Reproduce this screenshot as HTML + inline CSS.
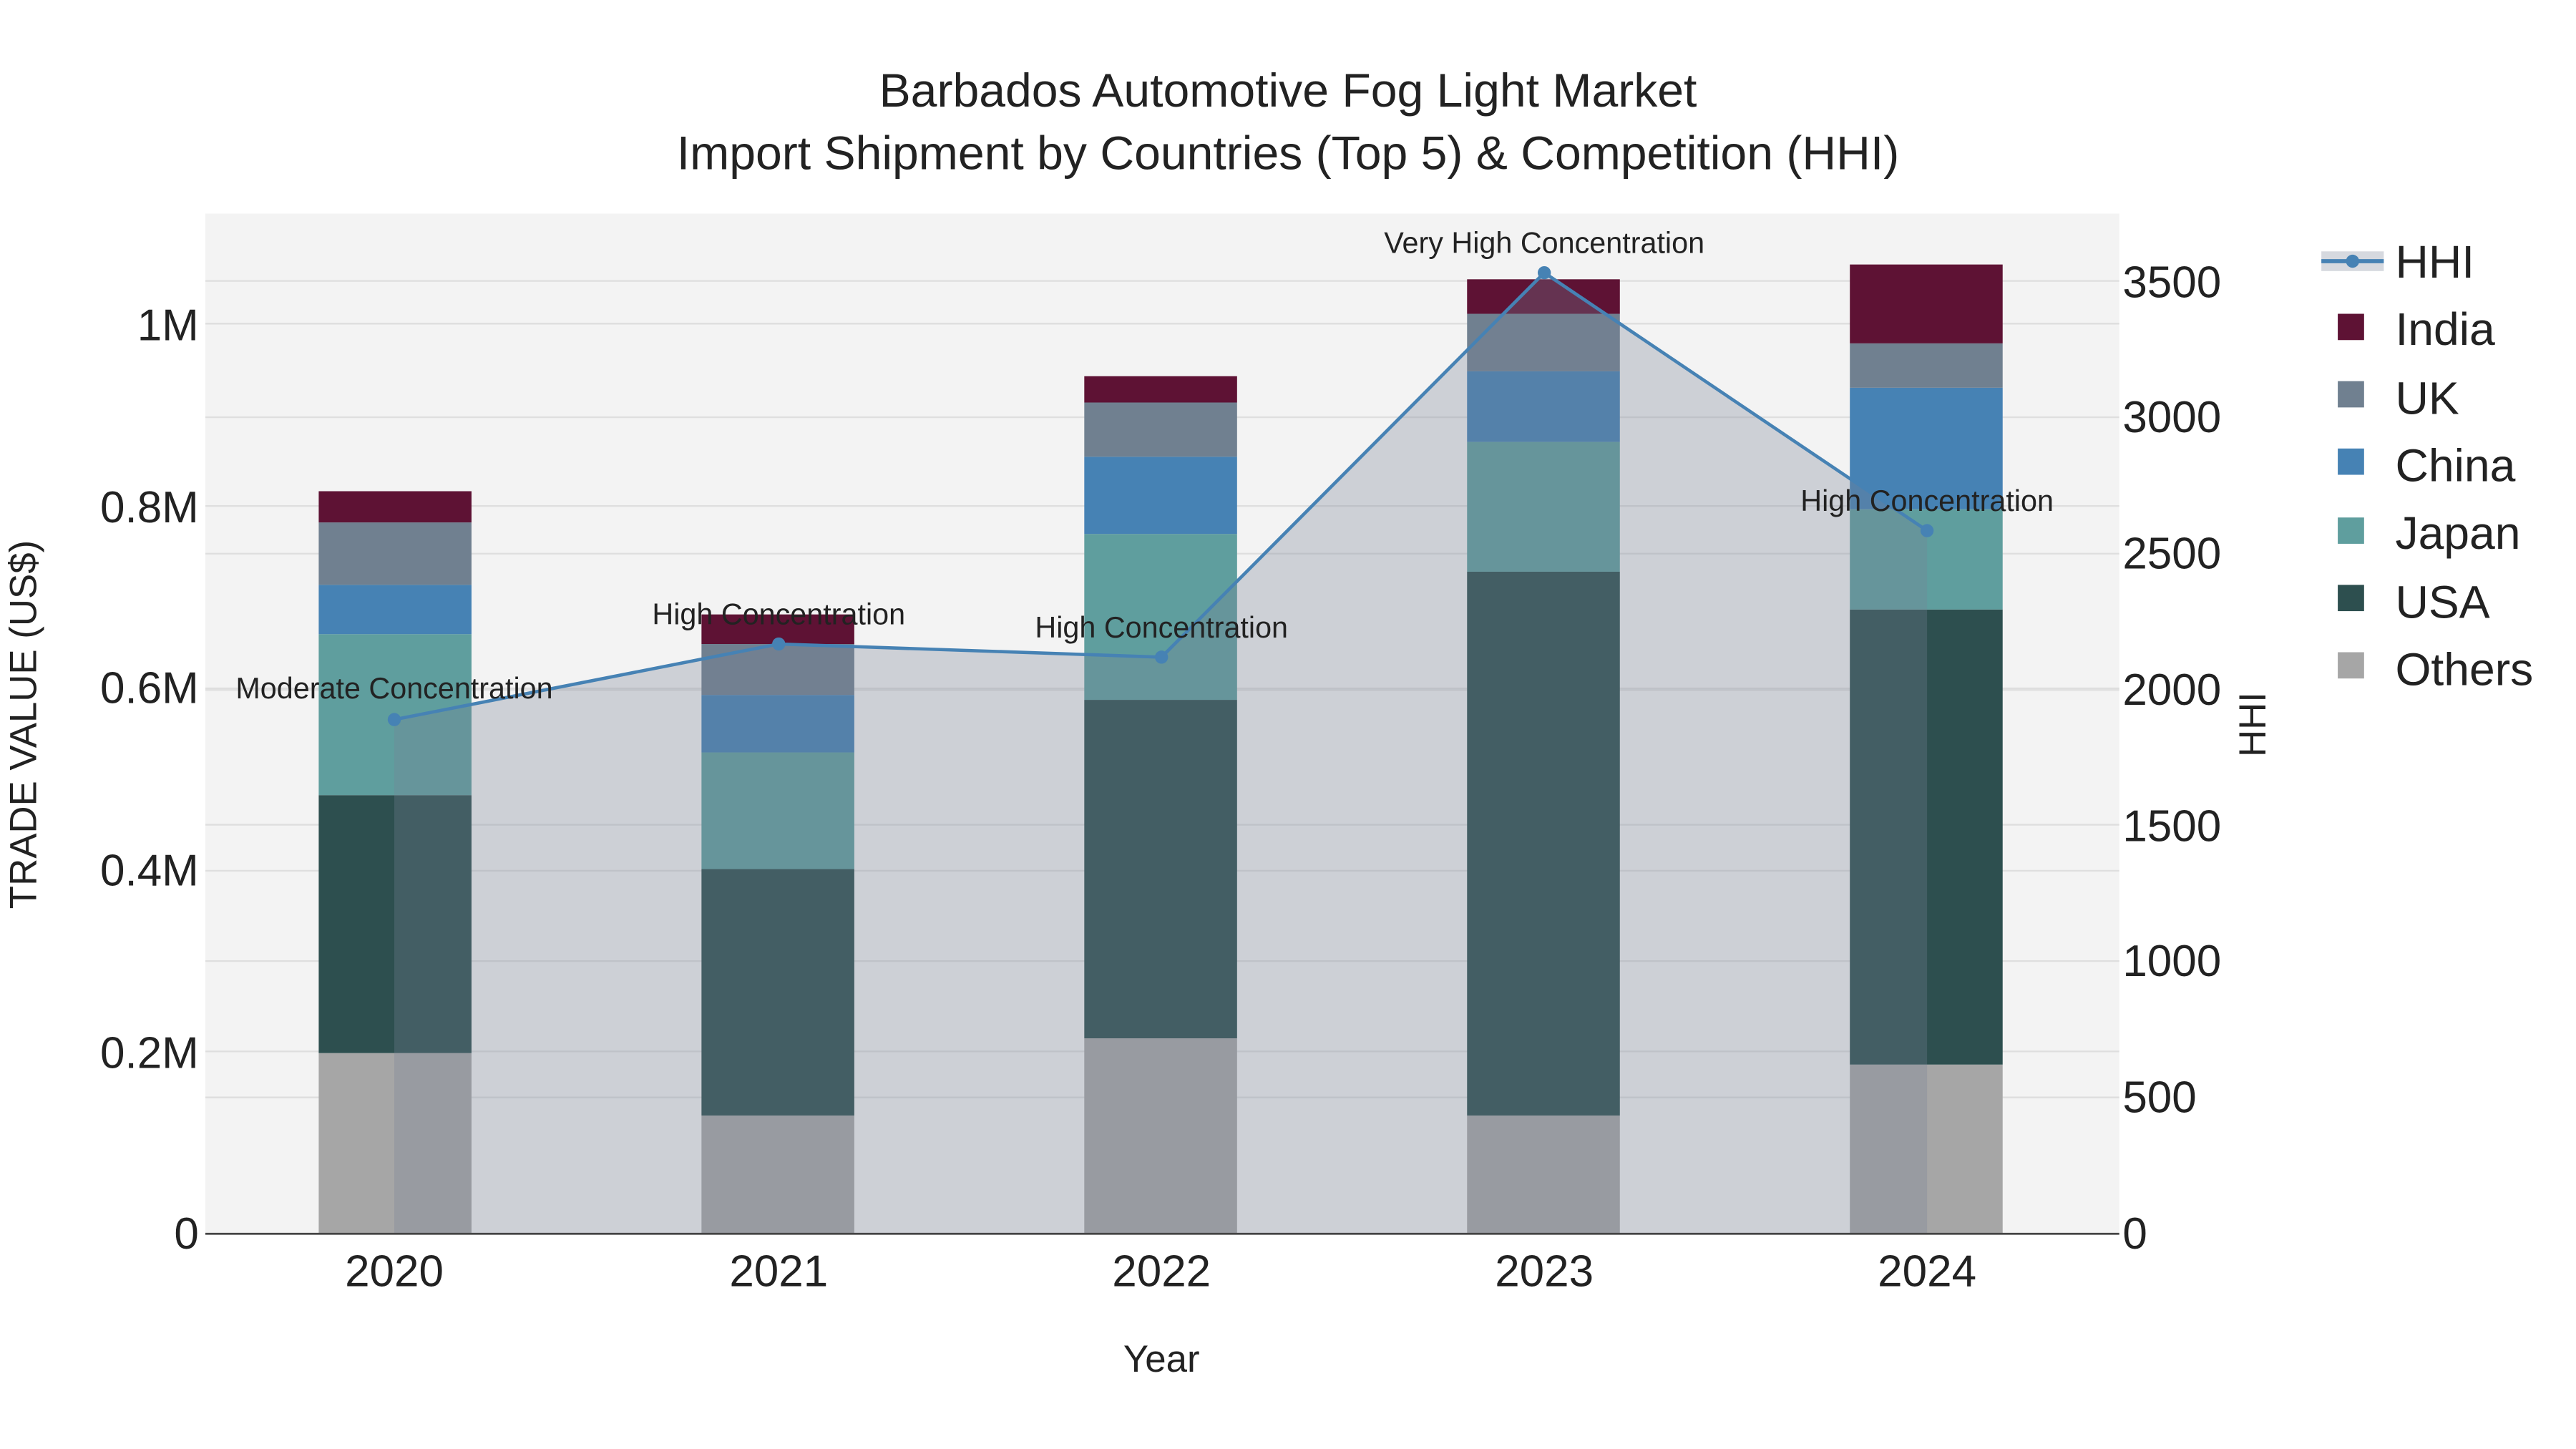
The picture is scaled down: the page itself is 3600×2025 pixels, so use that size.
<!DOCTYPE html>
<html><head><meta charset="utf-8">
<style>
html,body{margin:0;padding:0;background:#fff;}
svg{display:block;}
text{font-family:"Liberation Sans",Arial,sans-serif;fill:#222;}
</style></head>
<body>
<svg width="3600" height="2025" viewBox="0 0 1568 882" xmlns="http://www.w3.org/2000/svg">
<rect x="0" y="0" width="1568" height="882" fill="#fff"/>
<rect x="125" y="130" width="1165" height="621" fill="#f3f3f3"/>
<g stroke="#dedede" stroke-width="1">
<line x1="125" x2="1290" y1="640" y2="640"/><line x1="125" x2="1290" y1="530" y2="530"/>
<line x1="125" x2="1290" y1="419" y2="419"/><line x1="125" x2="1290" y1="308" y2="308"/>
<line x1="125" x2="1290" y1="197" y2="197"/>
<line x1="125" x2="1290" y1="668" y2="668"/><line x1="125" x2="1290" y1="585" y2="585"/>
<line x1="125" x2="1290" y1="502" y2="502"/><line x1="125" x2="1290" y1="420" y2="420"/>
<line x1="125" x2="1290" y1="337" y2="337"/><line x1="125" x2="1290" y1="254" y2="254"/>
<line x1="125" x2="1290" y1="171" y2="171"/>
</g>
<g>
<rect x="194" y="641" width="93" height="110" fill="#a6a6a6"/>
<rect x="194" y="484" width="93" height="157" fill="#2d4f4f"/>
<rect x="194" y="386" width="93" height="98" fill="#5f9e9e"/>
<rect x="194" y="356" width="93" height="30" fill="#4682b4"/>
<rect x="194" y="318" width="93" height="38" fill="#708090"/>
<rect x="194" y="299" width="93" height="19" fill="#5e1234"/>

<rect x="427" y="679" width="93" height="72" fill="#a6a6a6"/>
<rect x="427" y="529" width="93" height="150" fill="#2d4f4f"/>
<rect x="427" y="458" width="93" height="71" fill="#5f9e9e"/>
<rect x="427" y="423" width="93" height="35" fill="#4682b4"/>
<rect x="427" y="392" width="93" height="31" fill="#708090"/>
<rect x="427" y="374" width="93" height="18" fill="#5e1234"/>

<rect x="660" y="632" width="93" height="119" fill="#a6a6a6"/>
<rect x="660" y="426" width="93" height="206" fill="#2d4f4f"/>
<rect x="660" y="325" width="93" height="101" fill="#5f9e9e"/>
<rect x="660" y="278" width="93" height="47" fill="#4682b4"/>
<rect x="660" y="245" width="93" height="33" fill="#708090"/>
<rect x="660" y="229" width="93" height="16" fill="#5e1234"/>

<rect x="893" y="679" width="93" height="72" fill="#a6a6a6"/>
<rect x="893" y="348" width="93" height="331" fill="#2d4f4f"/>
<rect x="893" y="269" width="93" height="79" fill="#5f9e9e"/>
<rect x="893" y="226" width="93" height="43" fill="#4682b4"/>
<rect x="893" y="191" width="93" height="35" fill="#708090"/>
<rect x="893" y="170" width="93" height="21" fill="#5e1234"/>

<rect x="1126" y="648" width="93" height="103" fill="#a6a6a6"/>
<rect x="1126" y="371" width="93" height="277" fill="#2d4f4f"/>
<rect x="1126" y="310" width="93" height="61" fill="#5f9e9e"/>
<rect x="1126" y="236" width="93" height="74" fill="#4682b4"/>
<rect x="1126" y="209" width="93" height="27" fill="#708090"/>
<rect x="1126" y="161" width="93" height="48" fill="#5e1234"/>
</g>
<polygon points="240,438 474,392 707,400 940,166 1173,323 1173,751 240,751" fill="rgba(120,130,150,0.3)"/>
<polyline points="240,438 474,392 707,400 940,166 1173,323" fill="none" stroke="#4682b4" stroke-width="2"/>
<g fill="#4682b4"><circle cx="240" cy="438" r="4"/><circle cx="474" cy="392" r="4"/><circle cx="707" cy="400" r="4"/><circle cx="940" cy="166" r="4"/><circle cx="1173" cy="323" r="4"/></g>
<line x1="125" x2="1290" y1="751" y2="751" stroke="#444" stroke-width="1.2"/>
<g font-size="18" text-anchor="middle">
<text x="240" y="425">Moderate Concentration</text>
<text x="474" y="380">High Concentration</text>
<text x="707" y="388">High Concentration</text>
<text x="940" y="154">Very High Concentration</text>
<text x="1173" y="311">High Concentration</text>
</g>
<g font-size="28.8" text-anchor="middle">
<text x="784" y="65">Barbados Automotive Fog Light Market</text>
<text x="784" y="103">Import Shipment by Countries (Top 5) &amp; Competition (HHI)</text>
</g>
<g font-size="27" text-anchor="end">
<text x="121" y="760">0</text><text x="121" y="650">0.2M</text><text x="121" y="539">0.4M</text>
<text x="121" y="428">0.6M</text><text x="121" y="318">0.8M</text><text x="121" y="207">1M</text>
</g>
<g font-size="27" text-anchor="start">
<text x="1292" y="760">0</text><text x="1292" y="677">500</text><text x="1292" y="594">1000</text>
<text x="1292" y="512">1500</text><text x="1292" y="429">2000</text><text x="1292" y="346">2500</text>
<text x="1292" y="263">3000</text><text x="1292" y="181">3500</text>
</g>
<g font-size="27" text-anchor="middle">
<text x="240" y="783">2020</text><text x="474" y="783">2021</text><text x="707" y="783">2022</text>
<text x="940" y="783">2023</text><text x="1173" y="783">2024</text>
</g>
<text x="707" y="835" font-size="23" text-anchor="middle">Year</text>
<text transform="translate(22,441) rotate(-90)" font-size="23" text-anchor="middle">TRADE VALUE (US$)</text>
<text transform="translate(1379,441) rotate(-90)" font-size="23" text-anchor="middle">HHI</text>
<rect x="1413" y="153" width="38" height="12" fill="rgba(120,130,150,0.3)"/>
<line x1="1413" x2="1451" y1="159" y2="159" stroke="#4682b4" stroke-width="2.5"/>
<circle cx="1432" cy="159" r="4" fill="#4682b4"/>
<g>
<rect x="1423" y="191" width="16" height="16" fill="#5e1234"/>
<rect x="1423" y="232" width="16" height="16" fill="#708090"/>
<rect x="1423" y="273" width="16" height="16" fill="#4682b4"/>
<rect x="1423" y="315" width="16" height="16" fill="#5f9e9e"/>
<rect x="1423" y="356" width="16" height="16" fill="#2d4f4f"/>
<rect x="1423" y="397" width="16" height="16" fill="#a6a6a6"/>
</g>
<g font-size="28">
<text x="1458" y="169">HHI</text><text x="1458" y="210">India</text><text x="1458" y="252">UK</text>
<text x="1458" y="293">China</text><text x="1458" y="334">Japan</text><text x="1458" y="376">USA</text>
<text x="1458" y="417">Others</text>
</g>
</svg>
</body></html>
